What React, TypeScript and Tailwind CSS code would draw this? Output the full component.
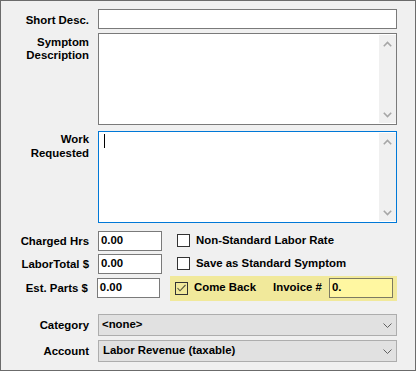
import React from "react";

const ChevUp = () => (
  <svg width="9" height="6" viewBox="0 0 9 6">
    <polyline points="0.8,5.2 4.5,1.5 8.2,5.2" fill="none" stroke="#a6a6a6" strokeWidth="1.6" />
  </svg>
);
const ChevDown = () => (
  <svg width="9" height="6" viewBox="0 0 9 6">
    <polyline points="0.8,0.8 4.5,4.5 8.2,0.8" fill="none" stroke="#a6a6a6" strokeWidth="1.6" />
  </svg>
);
const SelChev = () => (
  <svg width="9" height="5" viewBox="0 0 9 5">
    <polyline points="0.5,0.5 4.5,4.5 8.5,0.5" fill="none" stroke="#606060" strokeWidth="1" />
  </svg>
);

function TextArea({ focused, cursor }: { focused?: boolean; cursor?: boolean }) {
  return (
    <div
      className={
        "ml-[9px] flex-1 h-[92px] flex bg-white py-[1px] border " +
        (focused ? "border-[#0078d7]" : "border-[#7a7a7a]")
      }
    >
      <div className="flex-1">
        {cursor && <div className="ml-[5px] mt-[1px] w-[1px] h-[14px] bg-black" />}
      </div>
      <div className="w-[17px] bg-[#f0f0f0] flex flex-col justify-between">
        <div className="h-[17px] flex items-center justify-center">
          <ChevUp />
        </div>
        <div className="h-[17px] flex items-center justify-center">
          <ChevDown />
        </div>
      </div>
    </div>
  );
}

function Check({ checked, bg }: { checked?: boolean; bg?: string }) {
  return (
    <div className={"w-[13px] h-[13px] border border-[#333333] shrink-0 " + (bg ?? "bg-white")}>
      {checked && (
        <svg width="11" height="11" viewBox="0 0 11 11">
          <polyline points="1.5,5 4,7.8 9.5,2" fill="none" stroke="#55553f" strokeWidth="1.1" />
        </svg>
      )}
    </div>
  );
}

function NumRow({ label, children }: { label: string; children: React.ReactNode }) {
  return (
    <div className="flex items-center h-[20px]">
      <div className="w-[88px] text-right leading-[13px] pt-[1px]">{label}</div>
      <div className="ml-[9px] w-[64px] h-[20px] border border-[#7a7a7a] bg-white flex items-center pl-[2px]">
        0.00
      </div>
      {children}
    </div>
  );
}

export default function App() {
  return (
    <div className="w-[416px] h-[371px] border border-[#6b6b6b] bg-[#f0f0f0] text-[11.4px] font-bold text-black font-['Liberation_Sans',Arial,sans-serif]">
      <div className="flex flex-col pt-[8px] pr-[18px]">
        <div className="flex items-start">
          <div className="w-[88px] text-right leading-[13px] pt-[5px]">Short Desc.</div>
          <div className="ml-[9px] flex-1 h-[20px] border border-[#7a7a7a] bg-white" />
        </div>
        <div className="flex items-start mt-[4px]">
          <div className="w-[88px] text-right leading-[13px] pt-[3px]">
            Symptom
            <br />
            Description
          </div>
          <TextArea />
        </div>
        <div className="flex items-start mt-[6px]">
          <div className="w-[88px] text-right leading-[14px] pt-[1px]">
            Work
            <br />
            Requested
          </div>
          <TextArea focused cursor />
        </div>
        <div className="flex flex-col mt-[8px]">
          <NumRow label="Charged Hrs">
            <div className="ml-[10px] pl-[5px] flex items-center">
              <Check />
              <span className="ml-[6px]">Non-Standard Labor Rate</span>
            </div>
          </NumRow>
          <div className="mt-[3px]">
            <NumRow label="LaborTotal $">
              <div className="ml-[10px] pl-[5px] flex items-center">
                <Check />
                <span className="ml-[6px]">Save as Standard Symptom</span>
              </div>
            </NumRow>
          </div>
          <div className="mt-[4px]">
            <NumRow label="Est. Parts $">
              <div className="ml-[10px] w-[227px] h-[25px] shrink-0 bg-[#f1e99b] pl-[5px] pr-[4px] flex items-center">
                <Check checked bg="bg-transparent" />
                <span className="ml-[6px]">Come Back</span>
                <span className="ml-[17px]">Invoice #</span>
                <div className="ml-auto w-[64px] h-[20px] border border-[#7c7a62] bg-[#fff7a1] flex items-center pl-[2px]">
                  0.
                </div>
              </div>
            </NumRow>
          </div>
        </div>
        <div className="flex items-center mt-[16px] h-[22px]">
          <div className="w-[88px] text-right leading-[13px] pt-[1px]">Category</div>
          <div className="ml-[9px] flex-1 h-[22px] border border-[#adadad] bg-[#e1e1e1] flex items-center pl-[3px] pr-[4px]">
            <span className="flex-1">&lt;none&gt;</span>
            <SelChev />
          </div>
        </div>
        <div className="flex items-center mt-[4px] h-[22px]">
          <div className="w-[88px] text-right leading-[13px] pt-[1px]">Account</div>
          <div className="ml-[9px] flex-1 h-[22px] border border-[#adadad] bg-[#e1e1e1] flex items-center pl-[4px] pr-[4px]">
            <span className="flex-1">Labor Revenue (taxable)</span>
            <SelChev />
          </div>
        </div>
      </div>
    </div>
  );
}
